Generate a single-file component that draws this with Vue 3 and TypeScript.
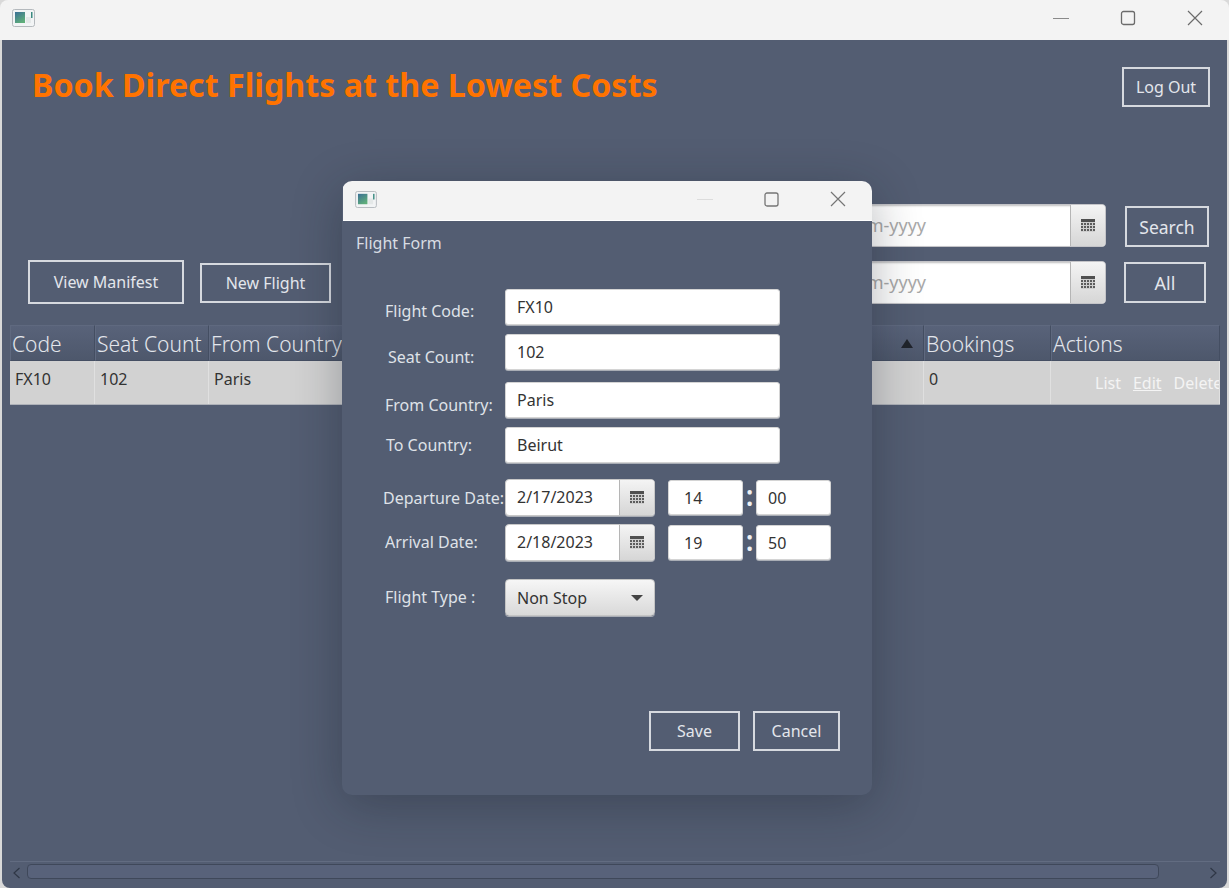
<script setup lang="ts">
interface Column { title: string; value: string; cls: string }
const columns: Column[] = [
  { title: 'Code', value: 'FX10', cls: 'c1' },
  { title: 'Seat Count', value: '102', cls: 'c2' },
  { title: 'From Country', value: 'Paris', cls: 'c3' },
  { title: '', value: '', cls: 'c4' },
  { title: '', value: '', cls: 'c5' },
  { title: '', value: '', cls: 'c6' },
  { title: 'Bookings', value: '0', cls: 'c7' }
]
const textRows = [
  { label: 'Flight Code:', value: 'FX10', cls: 'r-code' },
  { label: 'Seat Count:', value: '102', cls: 'r-seat' },
  { label: 'From Country:', value: 'Paris', cls: 'r-from' },
  { label: 'To Country:', value: 'Beirut', cls: 'r-to' }
]
const dateRows = [
  { label: 'Departure Date:', date: '2/17/2023', h: '14', m: '00', cls: 'r-dep' },
  { label: 'Arrival Date:', date: '2/18/2023', h: '19', m: '50', cls: 'r-arr' }
]
const calCells: number[][] = []
for (let y = 0; y < 3; y++) for (let x = 0; x < 5; x++) calCells.push([x * 3, 4 + y * 3])
</script>

<template>
  <div class="win">
    <div class="titlebar">
      <svg class="appicon" width="23" height="18" viewBox="0 0 23 18">
        <rect x="0.5" y="0.5" width="22" height="17" rx="2" fill="#f2f4f5" stroke="#b4b9bd" />
        <defs>
          <linearGradient id="ag" x1="0" y1="0" x2="0.6" y2="1">
            <stop offset="0" stop-color="#3a6f96" />
            <stop offset="1" stop-color="#5fae7a" />
          </linearGradient>
        </defs>
        <rect x="3" y="3" width="10" height="11" fill="url(#ag)" />
        <rect x="14" y="8" width="5" height="6" fill="#e4e8e8" />
        <rect x="19" y="3" width="1.5" height="6" fill="#3a8a80" />
      </svg>
      <div class="caps">
        <svg width="16" height="16" viewBox="0 0 16 16"><path d="M0 8.5H16" stroke="#8a8a8a" /></svg>
        <svg width="16" height="16" viewBox="0 0 16 16"><rect x="1.5" y="1.5" width="13" height="13" rx="2" fill="none" stroke="#6b6b6b" stroke-width="1.3" /></svg>
        <svg width="16" height="16" viewBox="0 0 16 16"><path d="M1 1L15 15M15 1L1 15" stroke="#6b6b6b" stroke-width="1.2" /></svg>
      </div>
    </div>

    <div class="content">
      <header class="head">
        <h1>Book Direct Flights at the Lowest Costs</h1>
        <button class="btn logout">Log Out</button>
      </header>

      <section class="tools">
        <div class="left-tools">
          <button class="btn manifest">View Manifest</button>
          <button class="btn newflight">New Flight</button>
        </div>
        <div class="filters">
          <div class="filter first">
            <div class="picker big">
              <span class="pinput ph">dd-mm-yyyy</span>
              <span class="pbtn"><svg width="14" height="13" viewBox="0 0 14 13"><rect width="14" height="13" fill="#cfcfcf" /><rect width="14" height="3" fill="#505050" /><rect v-for="(c, i) in calCells" :key="i" :x="c[0]" :y="c[1]" width="2" height="2" fill="#5c5c5c" /></svg></span>
            </div>
            <button class="btn search">Search</button>
          </div>
          <div class="filter second">
            <div class="picker big">
              <span class="pinput ph">dd-mm-yyyy</span>
              <span class="pbtn"><svg width="14" height="13" viewBox="0 0 14 13"><rect width="14" height="13" fill="#cfcfcf" /><rect width="14" height="3" fill="#505050" /><rect v-for="(c, i) in calCells" :key="i" :x="c[0]" :y="c[1]" width="2" height="2" fill="#5c5c5c" /></svg></span>
            </div>
            <button class="btn all">All</button>
          </div>
        </div>
      </section>

      <section class="table">
        <div class="thead">
          <div v-for="c in columns" :key="c.cls" class="th" :class="c.cls">
            {{ c.title }}
            <span v-if="c.cls === 'c6'" class="sort"></span>
          </div>
          <div class="th c8">Actions</div>
        </div>
        <div class="tbody">
          <div v-for="c in columns" :key="c.cls" class="td" :class="c.cls">{{ c.value }}</div>
          <div class="td c8 actions"><span>List</span><span class="ul">Edit</span><span>Delete</span></div>
        </div>
      </section>

      <div class="spacer"></div>

      <div class="scrollbar">
        <svg width="10" height="12" viewBox="0 0 10 12"><path d="M7.5 1L2 6L7.5 11" fill="none" stroke="#2f3746" stroke-width="1.2" /></svg>
        <div class="track"><div class="thumb"></div></div>
        <svg width="10" height="12" viewBox="0 0 10 12"><path d="M2.5 1L8 6L2.5 11" fill="none" stroke="#2f3746" stroke-width="1.2" /></svg>
      </div>
    </div>

    <div class="dialog">
      <div class="dtitle">
        <svg class="appicon" width="22" height="17" viewBox="0 0 23 18">
          <rect x="0.5" y="0.5" width="22" height="17" rx="2" fill="#f2f4f5" stroke="#b4b9bd" />
          <rect x="3" y="3" width="10" height="11" fill="url(#ag)" />
          <rect x="14" y="8" width="5" height="6" fill="#e4e8e8" />
          <rect x="19" y="3" width="1.5" height="6" fill="#3a8a80" />
        </svg>
        <div class="dcaps">
          <svg width="16" height="16" viewBox="0 0 16 16"><path d="M0 8.5H16" stroke="#dcdcdc" /></svg>
          <svg width="15" height="15" viewBox="0 0 15 15"><rect x="1" y="1" width="13" height="13" rx="2" fill="none" stroke="#757575" stroke-width="1.3" /></svg>
          <svg width="16" height="16" viewBox="0 0 16 16"><path d="M1 1L15 15M15 1L1 15" stroke="#757575" stroke-width="1.2" /></svg>
        </div>
      </div>
      <div class="dbody">
        <div class="dheading">Flight Form</div>
        <div v-for="r in textRows" :key="r.label" class="frow" :class="r.cls">
          <label class="flabel">{{ r.label }}</label>
          <span class="field wide">{{ r.value }}</span>
        </div>
        <div v-for="r in dateRows" :key="r.label" class="frow" :class="r.cls">
          <label class="flabel">{{ r.label }}</label>
          <div class="picker small">
            <span class="pinput">{{ r.date }}</span>
            <span class="pbtn"><svg width="14" height="13" viewBox="0 0 14 13"><rect width="14" height="13" fill="#cfcfcf" /><rect width="14" height="3" fill="#505050" /><rect v-for="(c, i) in calCells" :key="i" :x="c[0]" :y="c[1]" width="2" height="2" fill="#5c5c5c" /></svg></span>
          </div>
          <span class="field time hour">{{ r.h }}</span>
          <span class="colon">:</span>
          <span class="field time">{{ r.m }}</span>
        </div>
        <div class="frow r-type">
          <label class="flabel">Flight Type :</label>
          <div class="combo"><span>Non Stop</span><i class="caret"></i></div>
        </div>
        <div class="dactions">
          <button class="btn save">Save</button>
          <button class="btn cancel">Cancel</button>
        </div>
      </div>
    </div>
  </div>
</template>

<style>
html, body { margin: 0; background: #dcdcdc; }
</style>

<style scoped>
.win {
  position: relative;
  width: 1229px;
  height: 888px;
  overflow: hidden;
  box-sizing: border-box;
  padding: 0 2px;
  display: flex;
  flex-direction: column;
  font-family: "Noto Sans", "Open Sans", sans-serif;
  font-size: 16px;
  color: #e3e6ec;
  background: #d9d9d9;
}
.titlebar {
  height: 40px;
  flex: none;
  background: #f3f3f3;
  display: flex;
  align-items: center;
  justify-content: space-between;
  margin: 0 -2px;
  padding: 0 26px 5px 12px;
  box-sizing: border-box;
  border-radius: 8px 8px 0 0;
}
.appicon { display: block; }
.caps { display: flex; gap: 51px; }
.content {
  flex: 1;
  min-height: 0;
  background: #535d72;
  display: flex;
  flex-direction: column;
  border-radius: 0 0 8px 8px;
}
.head {
  display: flex;
  justify-content: space-between;
  align-items: flex-start;
  padding: 27px 17px 0 30px;
  height: 164px;
  box-sizing: border-box;
  flex: none;
}
h1 {
  margin: 0;
  font-size: 32.2px;
  line-height: 36px;
  font-weight: 700;
  color: #ff7300;
  white-space: nowrap;
}
.btn {
  font: inherit;
  color: #e3e6ec;
  background: transparent;
  border: 2px solid #d6d9df;
  box-sizing: border-box;
  padding: 0;
  display: block;
}
.logout { width: 88px; height: 40px; }
.tools {
  flex: none;
  height: 121px;
  display: flex;
  justify-content: space-between;
  padding: 0 18px 0 26px;
  box-sizing: border-box;
}
.left-tools { display: flex; align-items: flex-start; gap: 16px; padding-top: 56px; }
.manifest { width: 156px; height: 44px; }
.newflight { width: 131px; height: 40px; margin-top: 3px; }
.filters { display: flex; flex-direction: column; align-items: flex-end; }
.filter { display: flex; align-items: flex-start; }
.first { height: 57px; gap: 19px; }
.first .btn { margin-top: 2px; }
.second { gap: 18px; padding-right: 3px; }
.second .btn { margin-top: 1px; }
.search { width: 84px; height: 41px; font-size: 17.5px; }
.all { width: 82px; height: 41px; font-size: 18px; }
.picker {
  display: flex;
  background: #fff;
  border-radius: 4px;
  overflow: hidden;
  box-sizing: border-box;
  color: #333;
}
.picker.big { width: 306px; height: 43px; font-size: 18px; box-shadow: inset 0 1px 2px rgba(0,0,0,.25); border: 1px solid #c4c4c8; }
.picker.small { width: 150px; height: 37px; border: 1px solid #c8c8c8; box-shadow: 0 1px 0 #a9adb5; }
.pinput { flex: 1; display: flex; align-items: center; padding-left: 11px; padding-bottom: 1px; }
.ph { color: #a9a9a9; justify-content: flex-end; padding-right: 144px; padding-bottom: 1px; }
.pbtn {
  display: flex;
  align-items: center;
  justify-content: center;
  background: linear-gradient(#f4f4f4, #d6d6d6);
  border-left: 1px solid #b5b5b5;
  width: 34px;
  flex: none;
}
.table { flex: none; margin: 0 7px 0 8px; overflow: hidden; }
.thead, .tbody { display: flex; }
.thead { height: 36px; background: linear-gradient(#59637a, #4d576b); }
.tbody { height: 44px; background: #d2d2d2; color: #333; border-bottom: 1px solid #aeb1b8; box-sizing: border-box; }
.th {
  font-size: 21px;
  line-height: 36px;
  padding-left: 1px;
  font-weight: 300;
  box-sizing: border-box;
  border-right: 1px solid #444e62;
  border-left: 1px solid #5f697f;
  border-top: 1px solid #5f697f;
  border-bottom: 1px solid #454f63;
  white-space: nowrap;
  position: relative;
}
.td { padding: 6px 0 0 5px; box-sizing: border-box; border-right: 1px solid #e0e0e0; white-space: nowrap; overflow: hidden; line-height: 24px; }
.c1 { width: 85px; flex: none; }
.c2 { width: 114px; flex: none; }
.c3 { width: 136px; flex: none; }
.c4 { width: 130px; flex: none; }
.c5 { width: 210px; flex: none; }
.c6 { width: 239px; flex: none; }
.c7 { width: 127px; flex: none; }
.c8 { flex: 1; min-width: 0; }
.sort {
  position: absolute;
  right: 10px;
  top: 13px;
  border-left: 6px solid transparent;
  border-right: 6px solid transparent;
  border-bottom: 9px solid #20242c;
}
.actions { color: #f4f4f4; display: flex; gap: 12px; padding: 10px 0 0 44px; overflow: hidden; }
.ul { text-decoration: underline; }
.spacer { flex: 1; }
.scrollbar {
  flex: none;
  height: 22px;
  margin: 0 7px 5px 8px;
  border-top: 1px solid #626c81;
  display: flex;
  align-items: center;
  gap: 5px;
  padding: 0 2px;
  box-sizing: border-box;
}
.track { flex: 1; height: 100%; padding: 2px 0; box-sizing: border-box; }
.thumb {
  width: 1132px;
  height: 15px;
  border: 1px solid #3f485a;
  border-radius: 4px;
  background: #58627a;
  box-sizing: border-box;
}
.dialog {
  position: absolute;
  left: 342px;
  top: 181px;
  width: 530px;
  height: 614px;
  display: flex;
  flex-direction: column;
  border-radius: 10px;
  overflow: hidden;
  background: #535d72;
  box-shadow: 0 10px 50px rgba(20, 24, 34, .32);
}
.dtitle {
  height: 40px;
  flex: none;
  background: #f3f3f3;
  border-bottom: 1px solid #fff;
  display: flex;
  align-items: center;
  justify-content: space-between;
  padding: 0 26px 3px 12px;
  box-sizing: border-box;
  margin-left: 1px;
}
.dcaps { display: flex; align-items: center; gap: 51px; }
.dbody { flex: 1; display: flex; flex-direction: column; min-height: 0; }
.dheading { padding: 10px 0 0 14px; line-height: 24px; height: 68px; box-sizing: border-box; flex: none; color: #d8dce3; }
.frow { display: flex; align-items: flex-start; flex: none; }
.flabel { width: 163px; flex: none; box-sizing: border-box; white-space: nowrap; color: #dfe2e8; line-height: 24px; }
.field {
  background: #fff;
  color: #333;
  border-radius: 3px;
  border: 1px solid #d4d4d4;
  box-sizing: border-box;
  display: flex;
  align-items: center;
  padding-left: 11px;
  box-shadow: 0 1px 0 #a9adb5;
}
.wide { width: 275px; height: 36px; }
.time { width: 75px; height: 35px; margin-top: 1px; padding-left: 11px; }
.hour { margin-left: 13px; padding-left: 15px; }
.colon { width: 13px; flex: none; text-align: center; color: #eef0f3; font-size: 28px; line-height: 32px; font-weight: 600; }
.r-code .flabel { padding: 10px 0 0 43px; }
.r-seat { margin-top: 9px; }
.r-seat .flabel { padding: 11px 0 0 46px; }
.r-from { margin-top: 12px; }
.r-from .flabel { padding: 11px 0 0 43px; }
.r-to { margin-top: 9px; }
.r-to .flabel { padding: 6px 0 0 44px; }
.r-dep { margin-top: 16px; }
.r-dep .flabel { padding: 7px 0 0 41px; }
.r-arr { margin-top: 8px; }
.r-arr .flabel { padding: 6px 0 0 43px; }
.r-type { margin-top: 18px; }
.r-type .flabel { padding: 6px 0 0 43px; }
.combo {
  width: 150px;
  height: 37px;
  box-sizing: border-box;
  display: flex;
  align-items: center;
  justify-content: space-between;
  padding: 0 11px;
  color: #333;
  border-radius: 4px;
  border: 1px solid #c4c4c4;
  background: linear-gradient(#f6f6f6, #d9d9d9);
  box-shadow: 0 1px 0 #a9adb5;
}
.caret {
  border-left: 6px solid transparent;
  border-right: 6px solid transparent;
  border-top: 6px solid #444;
}
.dactions { display: flex; gap: 13px; padding: 95px 0 0 307px; }
.save { width: 91px; height: 40px; }
.cancel { width: 87px; height: 40px; }
</style>
